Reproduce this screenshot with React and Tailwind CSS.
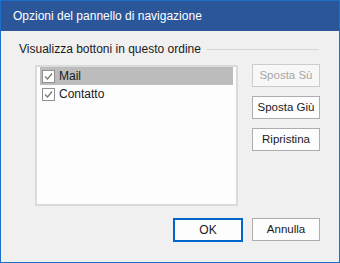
import React, { useState } from 'react';

const font = { fontFamily: '"Liberation Sans", Arial, sans-serif' };

const CheckBox = () => (
  <span className="w-[13px] h-[13px] border border-[#8f8f8f] bg-white flex items-center justify-center shrink-0">
    <svg width="9" height="9" viewBox="0 0 9 9">
      <path d="M1 4.5 L3.5 7 L8 1.5" fill="none" stroke="#7a7a7a" strokeWidth="1.3" />
    </svg>
  </span>
);

const Button = ({ children, disabled, primary }) => (
  <button
    className={
      primary
        ? 'w-[70px] h-[24px] border-2 border-[#0066cc] bg-[#fdfdfd] text-[12px] text-[#1a1a1a]'
        : disabled
        ? 'w-[68px] h-[23px] border border-[#cccccc] bg-[#f7f7f7] text-[11.5px] text-[#a6a6a6]'
        : 'w-[68px] h-[23px] border border-[#adadad] bg-[#fdfdfd] text-[11.5px] text-[#1a1a1a]'
    }
  >
    {children}
  </button>
);

export default function App() {
  const [items] = useState([
    { label: 'Mail', selected: true },
    { label: 'Contatto', selected: false },
  ]);

  return (
    <div style={font} className="w-[340px] h-[263px] border border-[#1e6fc8] bg-[#f0f0f0] flex flex-col">
      {/* Title bar */}
      <div className="h-[30px] bg-[#2b579a] flex items-center pl-[12px] text-white text-[12px] shrink-0">
        Opzioni del pannello di navigazione
      </div>

      <div className="flex flex-col px-[18px] pt-[9px]">
        {/* Group label */}
        <div className="h-[18px] flex items-center gap-[6px] text-[12px] text-[#1a1a1a] pr-[2px]">
          <span>Visualizza bottoni in questo ordine</span>
          <span className="flex-1 h-px bg-[#d5d5d5]" />
        </div>

        <div className="flex mt-[7px] pl-[16px] gap-[14px]">
          {/* List */}
          <div className="w-[203px] h-[141px] border-2 border-[#dadada] bg-[#fdfdfd] px-[3px]">
            {items.map((it) => (
              <div
                key={it.label}
                className={`h-[18px] flex items-center gap-[4px] pl-[2px] text-[12px] text-[#1a1a1a] ${
                  it.selected ? 'bg-[#bcbcbc]' : ''
                }`}
              >
                <CheckBox />
                <span>{it.label}</span>
              </div>
            ))}
          </div>

          {/* Side buttons */}
          <div className="flex flex-col gap-[9px] -mt-[1px]">
            <Button disabled>Sposta Sù</Button>
            <Button>Sposta Giù</Button>
            <Button>Ripristina</Button>
          </div>
        </div>

        {/* Bottom buttons */}
        <div className="flex justify-end gap-[9px] mt-[12px] pr-[1px]">
          <Button primary>OK</Button>
          <Button>Annulla</Button>
        </div>
      </div>
    </div>
  );
}
